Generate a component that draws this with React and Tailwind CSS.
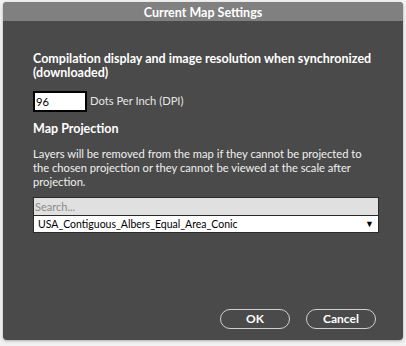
export default function App() {
  return (
    <div className="w-[406px] h-[346px] bg-[#f2f2f2] pt-[2px] pl-[3px] overflow-hidden" style={{ fontFamily: 'Lato, sans-serif' }}>
      <div className="w-[400px] h-[338px] rounded-[4px] bg-[#4a4a4a] overflow-hidden flex flex-col shadow-[0_1px_3px_rgba(0,0,0,0.3)]">
        <div className="h-[19px] shrink-0 bg-[#808080] text-center text-white font-bold text-[12.5px] leading-[21px]">Current Map Settings</div>
        <div className="flex-1 flex flex-col px-[30px] pt-[31px] text-[11.2px] text-white">
          <div className="font-bold text-[12.5px] leading-[14px]">Compilation display and image resolution when synchronized (downloaded)</div>
          <div className="flex items-center mt-[11px]">
            <div className="w-[54px] h-[21px] border-2 border-black bg-white text-black leading-[17px] pl-[1px]">96</div>
            <span className="ml-[3px] text-[#e6e6e6]">Dots Per Inch (DPI)</span>
          </div>
          <div className="font-bold text-[12.5px] mt-[10px] leading-[14px]">Map Projection</div>
          <div className="mt-[11px] leading-[14px] text-[#f0f0f0]">Layers will be removed from the map if they cannot be projected to the chosen projection or they cannot be viewed at the scale after projection.</div>
          <div className="mt-[8px] w-[346px] h-[19px] border border-[#2a2a2a] bg-[#e0e0e0] text-[#8a8a8a] text-[11px] leading-[17px] pl-[1px]">Search...</div>
          <div className="w-[346px] h-[17px] border border-[#2a2a2a] border-t-0 bg-white text-black text-[10.5px] leading-[16px] pl-[4px] flex justify-between pr-[4px]">
            <span>USA_Contiguous_Albers_Equal_Area_Conic</span>
            <span className="text-[9px]">▼</span>
          </div>
          <div className="flex-1" />
          <div className="flex justify-end gap-[16px] mb-[11px] mr-[-3px]">
            <button className="w-[70px] h-[20px] rounded-full border border-[#d0d0d0] text-white text-[12px] font-bold leading-[18px]">OK</button>
            <button className="w-[70px] h-[20px] rounded-full border border-[#d0d0d0] text-white text-[12px] font-bold leading-[18px]">Cancel</button>
          </div>
        </div>
      </div>
    </div>
  );
}
